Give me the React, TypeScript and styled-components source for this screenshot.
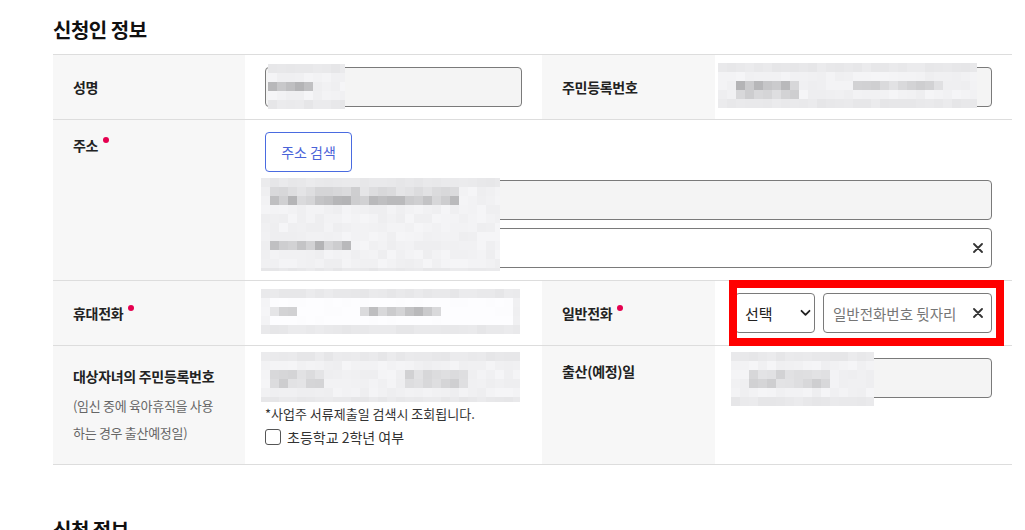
import React from "react";
import styled, { createGlobalStyle } from "styled-components";

const Global = createGlobalStyle`
  html, body { margin: 0; padding: 0; background: #fff; }
  body {
    font-family: "Noto Sans CJK KR", "Noto Sans", sans-serif;
    color: #222;
  }
  * { box-sizing: border-box; }
`;

const Page = styled.div`
  width: 1025px;
  padding: 16px 13px 0 53px;
`;

const Section = styled.section`
  margin-bottom: 51px;
`;

const Title = styled.h2`
  margin: 0 0 10px;
  font-size: 20px;
  line-height: 28px;
  font-weight: 700;
  color: #111;
  letter-spacing: -0.5px;
`;

const Table = styled.div`
  display: grid;
  grid-template-columns: 192px 297px 173px 297px;
  border-top: 1px solid #ddd;
`;

const Label = styled.div<{ $top?: boolean }>`
  background: #f7f7f7;
  border-bottom: 1px solid #ddd;
  padding: ${(p) => (p.$top ? "15px 20px 0" : "0 20px")};
  display: flex;
  flex-direction: column;
  justify-content: ${(p) => (p.$top ? "flex-start" : "center")};
  font-size: 14px;
  line-height: 20px;
  font-weight: 700;
  color: #222;
  letter-spacing: -0.3px;
`;

const LabelText = styled.span<{ $offset?: number }>`
  position: relative;
  display: inline-block;
  align-self: flex-start;
  margin-top: ${(p) => p.$offset ?? 0}px;
`;

const Required = styled.i`
  position: absolute;
  right: -11px;
  top: 2px;
  width: 6px;
  height: 6px;
  border-radius: 50%;
  background: #e5004f;
`;

const SubText = styled.span<{ $first?: boolean }>`
  display: block;
  font-size: 13px;
  font-weight: 400;
  line-height: 27px;
  color: #666;
  margin-top: ${(p) => (p.$first ? 6 : 0)}px;
`;

const Value = styled.div<{ $span?: boolean; $column?: boolean }>`
  position: relative;
  grid-column: ${(p) => (p.$span ? "span 3" : "auto")};
  border-bottom: 1px solid #ddd;
  padding: 12px 20px;
  display: flex;
  flex-direction: ${(p) => (p.$column ? "column" : "row")};
  align-items: ${(p) => (p.$column ? "stretch" : "flex-start")};
  gap: 8px;
`;

const Input = styled.input<{ $readonly?: boolean }>`
  display: block;
  width: 100%;
  height: 40px;
  border: 1px solid #7a7a7a;
  border-radius: 4px;
  background: ${(p) => (p.$readonly ? "#f4f4f4" : "#fff")};
  padding: 0 30px 0 9px;
  font-family: inherit;
  font-size: 14.5px;
  color: #222;
  outline: none;
  &::placeholder { color: #767676; }
`;

const InputWrap = styled.div<{ $w?: number }>`
  position: relative;
  flex: ${(p) => (p.$w ? `0 0 ${p.$w}px` : "1 1 auto")};
  width: ${(p) => (p.$w ? `${p.$w}px` : "auto")};
`;

const ClearBtn = styled.span`
  position: absolute;
  right: 9px;
  top: 50%;
  margin-top: -5px;
  width: 10px;
  height: 10px;
  display: flex;
`;

const Row = styled.div`
  display: flex;
  gap: 10px;
`;

const SearchButton = styled.button`
  align-self: flex-start;
  width: 87px;
  height: 40px;
  border: 1px solid #4a6be0;
  border-radius: 4px;
  background: #fff;
  color: #4a63d8;
  font-family: inherit;
  font-size: 14px;
  cursor: pointer;
  padding: 0;
`;

const SelectWrap = styled.div`
  position: relative;
  flex: 0 0 80px;
`;

const Select = styled.select`
  appearance: none;
  width: 80px;
  height: 40px;
  border: 1px solid #7a7a7a;
  border-radius: 4px;
  background: #fff;
  padding: 0 0 0 9px;
  font-family: inherit;
  font-size: 15px;
  color: #222;
`;

const Chevron = styled.span`
  position: absolute;
  right: 4px;
  top: 16px;
  display: flex;
  pointer-events: none;
`;

const Note = styled.p`
  margin: 0;
  font-size: 13px;
  line-height: 20px;
  color: #333;
  margin-top: -2px;
`;

const CheckRow = styled.label`
  display: flex;
  align-items: center;
  gap: 6px;
  font-size: 14px;
  line-height: 20px;
  color: #333;
  margin: -5px 0 5px;
`;

const Box = styled.span`
  width: 16px;
  height: 16px;
  border: 1.5px solid #555;
  border-radius: 3px;
  background: #fff;
`;

const Highlight = styled.div`
  position: absolute;
  left: 14px;
  right: 8px;
  top: -1px;
  bottom: -1px;
  border: 8px solid #ff0000;
  pointer-events: none;
`;

const MosaicBox = styled.svg`
  position: absolute;
  pointer-events: none;
`;

type Band = { x: number; y: number; w: number; h: number; tone: "dark" | "mid" | "white" };

function rng(seed: number) {
  let s = seed;
  return () => {
    s = (s * 9301 + 49297) % 233280;
    return s / 233280;
  };
}

const Mosaic: React.FC<{
  left: number;
  top: number;
  w: number;
  h: number;
  bands: Band[];
  seed: number;
}> = ({ left, top, w, h, bands, seed }) => {
  const cell = 9;
  const r = rng(seed);
  const cols = Math.ceil(w / cell);
  const rows = Math.ceil(h / cell);
  const rects: React.ReactNode[] = [];
  const gray = (v: number) => `rgb(${v},${v},${v + 2})`;
  for (let j = 0; j < rows; j++) {
    for (let i = 0; i < cols; i++) {
      const cx = i * cell + cell / 2;
      const cy = j * cell + cell / 2;
      let v = 238 + Math.floor(r() * 8);
      if (j === 0 || j === rows - 1) v = 230 + Math.floor(r() * 6);
      for (const b of bands) {
        if (cx >= b.x && cx <= b.x + b.w && cy >= b.y && cy <= b.y + b.h) {
          if (b.tone === "dark") v = 180 + Math.floor(r() * 40);
          else if (b.tone === "mid") v = 205 + Math.floor(r() * 25);
          else v = 252 + Math.floor(r() * 3);
        }
      }
      rects.push(
        <rect key={`${i}-${j}`} x={i * cell} y={j * cell} width={cell} height={cell} fill={gray(Math.min(v, 253))} />
      );
    }
  }
  return (
    <MosaicBox style={{ left, top }} width={w} height={h} viewBox={`0 0 ${w} ${h}`}>
      {rects}
    </MosaicBox>
  );
};

const XIcon = () => (
  <svg width="10" height="10" viewBox="0 0 10 10">
    <path d="M1 1L9 9M9 1L1 9" stroke="#333" strokeWidth="1.8" strokeLinecap="round" />
  </svg>
);

const ChevronIcon = () => (
  <svg width="11" height="8" viewBox="0 0 11 8">
    <path d="M1.5 1.8L5.5 5.8L9.5 1.8" stroke="#222" strokeWidth="1.8" fill="none" strokeLinecap="round" strokeLinejoin="round" />
  </svg>
);

export default function App() {
  return (
    <Page>
      <Global />
      <Section>
        <Title>신청인 정보</Title>
        <Table>
          <Label>성명</Label>
          <Value>
            <Input $readonly readOnly />
            <Mosaic left={23} top={9} w={77} h={45} seed={3} bands={[{ x: 2, y: 18, w: 45, h: 9, tone: "dark" }]} />
          </Value>
          <Label>주민등록번호</Label>
          <Value>
            <Input $readonly readOnly />
            <Mosaic
              left={3}
              top={8}
              w={259}
              h={45}
              seed={7}
              bands={[
                { x: 20, y: 18, w: 62, h: 9, tone: "dark" },
                { x: 20, y: 27, w: 62, h: 9, tone: "mid" },
                { x: 137, y: 18, w: 90, h: 9, tone: "mid" },
              ]}
            />
          </Value>

          <Label $top>
            <LabelText>
              주소<Required />
            </LabelText>
          </Label>
          <Value $span $column>
            <SearchButton type="button">주소 검색</SearchButton>
            <Input $readonly readOnly />
            <InputWrap>
              <Input readOnly />
              <ClearBtn>
                <XIcon />
              </ClearBtn>
            </InputWrap>
            <Mosaic
              left={16}
              top={58}
              w={239}
              h={93}
              seed={11}
              bands={[
                { x: 9, y: 10, w: 190, h: 9, tone: "mid" },
                { x: 9, y: 19, w: 190, h: 9, tone: "dark" },
                { x: 9, y: 64, w: 80, h: 9, tone: "dark" },
              ]}
            />
          </Value>

          <Label>
            <LabelText>
              휴대전화<Required />
            </LabelText>
          </Label>
          <Value>
            <Row>
              <InputWrap $w={75}>
                <Input readOnly />
              </InputWrap>
              <InputWrap $w={160}>
                <Input readOnly />
              </InputWrap>
            </Row>
            <Mosaic
              left={16}
              top={8}
              w={259}
              h={45}
              seed={19}
              bands={[
                { x: 9, y: 9, w: 200, h: 27, tone: "white" },
                { x: 96, y: 9, w: 156, h: 27, tone: "white" },
                { x: 9, y: 18, w: 25, h: 9, tone: "mid" },
                { x: 99, y: 18, w: 80, h: 9, tone: "dark" },
              ]}
            />
          </Value>
          <Label>
            <LabelText>
              일반전화<Required />
            </LabelText>
          </Label>
          <Value>
            <SelectWrap>
              <Select defaultValue="">
                <option value="">선택</option>
              </Select>
              <Chevron>
                <ChevronIcon />
              </Chevron>
            </SelectWrap>
            <InputWrap>
              <Input placeholder="일반전화번호 뒷자리" />
              <ClearBtn>
                <XIcon />
              </ClearBtn>
            </InputWrap>
            <Highlight />
          </Value>

          <Label $top>
            <LabelText $offset={5}>대상자녀의 주민등록번호</LabelText>
            <SubText $first>(임신 중에 육아휴직을 사용</SubText>
            <SubText>하는 경우 출산예정일)</SubText>
          </Label>
          <Value $column>
            <Row>
              <InputWrap $w={120}>
                <Input $readonly readOnly />
              </InputWrap>
              <InputWrap $w={120}>
                <Input $readonly readOnly />
              </InputWrap>
            </Row>
            <Note>*사업주 서류제출일 검색시 조회됩니다.</Note>
            <CheckRow>
              <Box />
              초등학교 2학년 여부
            </CheckRow>
            <Mosaic
              left={16}
              top={6}
              w={259}
              h={50}
              seed={23}
              bands={[
                { x: 9, y: 18, w: 55, h: 18, tone: "mid" },
                { x: 144, y: 18, w: 63, h: 18, tone: "mid" },
              ]}
            />
          </Value>
          <Label $top>출산(예정)일</Label>
          <Value>
            <Input $readonly readOnly />
            <Mosaic
              left={16}
              top={6}
              w={143}
              h={54}
              seed={31}
              bands={[{ x: 16, y: 18, w: 80, h: 18, tone: "mid" }]}
            />
          </Value>
        </Table>
      </Section>
      <Section>
        <Title>신청 정보</Title>
      </Section>
    </Page>
  );
}
